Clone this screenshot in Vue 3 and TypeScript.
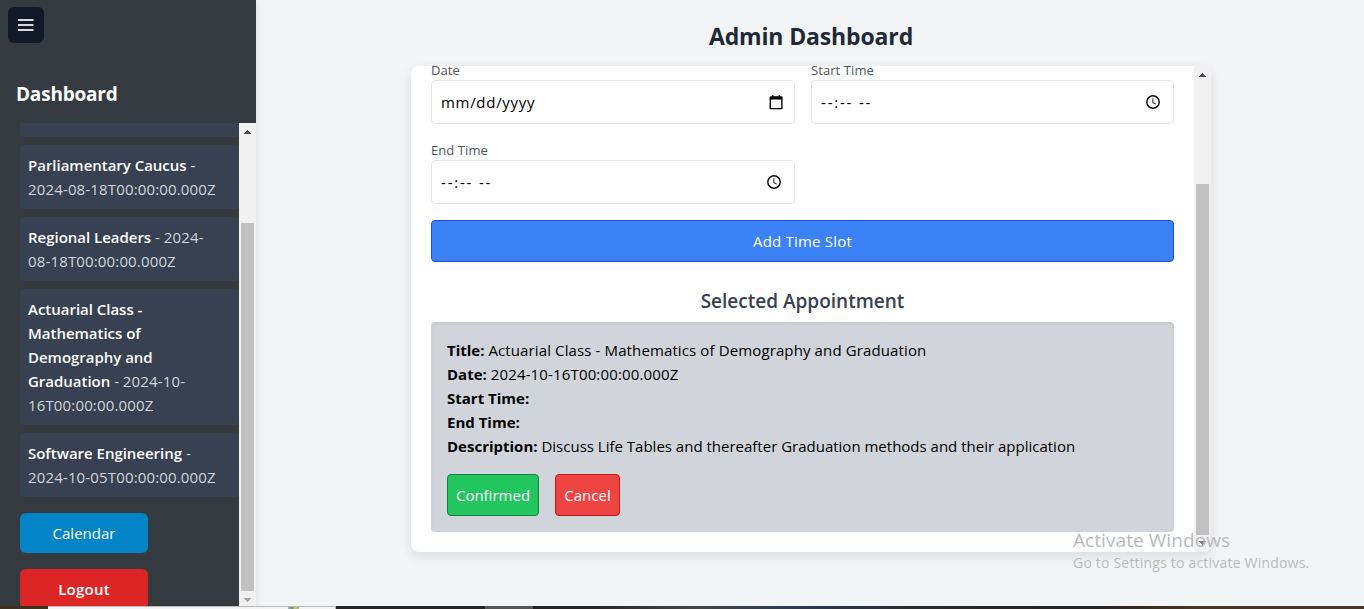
<script setup lang="ts">
interface Appointment {
  title: string
  date: string
  brightDash?: boolean
}

interface Detail {
  label: string
  value: string
  tone: string
}

const appointments: Appointment[] = [
  { title: 'Parliamentary Caucus', date: '2024-08-18T00:00:00.000Z', brightDash: true },
  { title: 'Regional Leaders', date: '2024-08-18T00:00:00.000Z' },
  { title: 'Actuarial Class - Mathematics of Demography and Graduation', date: '2024-10-16T00:00:00.000Z' },
  { title: 'Software Engineering', date: '2024-10-05T00:00:00.000Z' },
]

const fields = [
  { label: 'Date', placeholder: 'mm/dd/yyyy', kind: 'date' },
  { label: 'Start Time', placeholder: '--:-- --', kind: 'time' },
  { label: 'End Time', placeholder: '--:-- --', kind: 'time' },
]

const details: Detail[] = [
  { label: 'Title:', value: 'Actuarial Class - Mathematics of Demography and Graduation', tone: 'title' },
  { label: 'Date:', value: '2024-10-16T00:00:00.000Z', tone: 'date' },
  { label: 'Start Time:', value: '', tone: 'start' },
  { label: 'End Time:', value: '', tone: 'end-time' },
  { label: 'Description:', value: 'Discuss Life Tables and thereafter Graduation methods and their application', tone: 'desc' },
]
</script>

<template>
  <div class="screen">
    <div class="page">
      <aside class="sidebar">
        <button class="menu" aria-label="Menu">
          <svg width="16" height="14" viewBox="0 0 16 14"><path d="M0 2h15.5M0 7h15.5M0 12h15.5" stroke="#d6d9de" stroke-width="1.8" /></svg>
        </button>
        <h2 class="side-title">Dashboard</h2>
        <div class="side-scroll">
          <div class="side-list">
            <div class="item stub"></div>
            <div v-for="a in appointments" :key="a.title" class="item">
              <strong>{{ a.title }}</strong><span :class="{ bright: a.brightDash }"> - </span><span class="stamp">{{ a.date }}</span>
            </div>
            <button class="nav calendar">Calendar</button>
            <button class="nav logout">Logout</button>
          </div>
          <div class="bar side-bar">
            <svg class="arrow" width="17" height="17" viewBox="0 0 17 17"><path d="M5 11h7v-1h-1v-1h-1v-1h-1v-1h-1v1h-1v1h-1v1h-1z" fill="#505050" shape-rendering="crispEdges" /></svg>
            <div class="thumb"></div>
            <svg class="arrow end" width="17" height="17" viewBox="0 0 17 17"><path d="M5 7h7v1h-1v1h-1v1h-1v1h-1v-1h-1v-1h-1v-1h-1z" fill="#a3a3a3" shape-rendering="crispEdges" /></svg>
          </div>
        </div>
      </aside>

      <main class="main">
        <h1 class="heading">Admin Dashboard</h1>
        <section class="card">
          <div class="content">
            <div class="fields">
              <div v-for="f in fields" :key="f.label" class="field">
                <label>{{ f.label }}</label>
                <div class="input" :class="f.kind">
                  <span>{{ f.placeholder }}</span>
                  <svg v-if="f.kind === 'date'" width="14" height="15" viewBox="0 0 14 15"><path d="M3 0h1.6v2H3zM9.6 0h1.6v2H9.6z" fill="#000" /><path d="M1.6 1.2h11q1 0 1 1v11q0 1-1 1h-11q-1 0-1-1v-11q0-1 1-1zM2 4.4v8.6h10.2V4.4z" fill="#000" fill-rule="evenodd" /></svg>
                  <svg v-else width="14" height="14" viewBox="0 0 14 14"><circle cx="7" cy="7" r="6.2" fill="none" stroke="#111" stroke-width="1.5" /><path d="M6.8 3.4v4l2.9 1.8" fill="none" stroke="#333" stroke-width="1.1" /></svg>
                </div>
              </div>
            </div>
            <button class="add">Add Time Slot</button>
            <h2 class="sub">Selected Appointment</h2>
            <div class="selected">
              <p v-for="d in details" :key="d.label" :class="d.tone"><strong>{{ d.label }}</strong> <span>{{ d.value }}</span></p>
              <div class="actions">
                <button class="confirm">Confirmed</button>
                <button class="cancel">Cancel</button>
              </div>
            </div>
          </div>
          <div class="bar card-bar">
            <svg class="arrow" width="17" height="17" viewBox="0 0 17 17"><path d="M5 11h7v-1h-1v-1h-1v-1h-1v-1h-1v1h-1v1h-1v1h-1z" fill="#505050" shape-rendering="crispEdges" /></svg>
            <div class="thumb"></div>
            <svg class="arrow end" width="17" height="17" viewBox="0 0 17 17"><path d="M5 6h7v1h-1v1h-1v1h-1v1h-1v-1h-1v-1h-1v-1h-1z" fill="#808080" shape-rendering="crispEdges" /></svg>
          </div>
        </section>
      </main>
    </div>
    <div class="taskbar">
      <div class="tb-start"></div>
      <div class="tb-search"><i></i></div>
      <div class="tb-rest"><i></i></div>
    </div>
    <div class="watermark">
      <div class="wm-title">Activate Windows</div>
      <div class="wm-text">Go to Settings to activate Windows.</div>
    </div>
  </div>
</template>

<style>
body { margin: 0; overflow: hidden; }
</style>

<style scoped>
* { box-sizing: border-box; }
h1, h2, p { margin: 0; }
button { font: inherit; padding: 0; border: 0; color: #fff; }
svg { display: block; flex: none; }
.screen {
  position: relative;
  width: 1364px;
  height: 609px;
  overflow: hidden;
  display: flex;
  flex-direction: column;
  background: #f3f4f6;
  font: 15px/24px "Open Sans", "Noto Sans", sans-serif;
  color: #000;
}
.page { display: flex; height: 606px; overflow: hidden; }

.sidebar {
  width: 256px;
  flex: none;
  display: flex;
  flex-direction: column;
  background: #343a40;
  box-shadow: 0 0 8px rgba(0, 0, 0, 0.1);
}
.menu {
  width: 36px;
  height: 36px;
  margin: 7px 0 0 8px;
  border-radius: 6px;
  background: #111827;
  display: flex;
  align-items: center;
  justify-content: center;
}
.side-title { margin: 37px 0 15px 16px; font-size: 19px; line-height: 28px; font-weight: 700; color: #fff; letter-spacing: -0.2px; }
.side-scroll { flex: 1; min-height: 0; display: flex; padding-left: 20px; overflow: hidden; }
.side-list { width: 219px; display: flex; flex-direction: column; overflow: hidden; }
.item { flex: none; padding: 8px 14px 8px 8px; margin-bottom: 8px; border-radius: 4px; background: #374151; color: #d1d5db; }
.item.stub { height: 14px; padding: 0; border-radius: 0 0 4px 4px; }
.item strong { font-weight: 600; color: #fff; letter-spacing: -0.02px; }
.stamp { letter-spacing: 0.15px; }
.bright { color: #fff; }
.nav { flex: none; width: 128px; height: 40px; border-radius: 6px; margin: 8px 0; }
.calendar { background: #0284c7; }
.logout { background: #dc2626; font-weight: 600; letter-spacing: 0.25px; }

.bar { width: 17px; flex: none; display: flex; flex-direction: column; align-items: center; background: #f1f1f1; }
.thumb { width: 13px; background: #c1c1c1; }
.side-bar .thumb { height: 369px; margin-top: 83px; }
.end { margin-top: auto; }
.side-bar .end { margin-bottom: -2px; }

.main { flex: 1; display: flex; flex-direction: column; align-items: center; padding-left: 2px; }
.heading { margin-top: 20px; font-size: 23px; line-height: 32px; font-weight: 700; color: #1f2937; letter-spacing: -0.14px; }
.card {
  width: 800px;
  height: 486px;
  margin-top: 14px;
  display: flex;
  border-radius: 8px;
  overflow: hidden;
  background: #fff;
  box-shadow: 0 4px 12px rgba(0, 0, 0, 0.1);
}
.content { width: 783px; padding: 0 20px; margin-top: -6px; }
.fields { display: grid; grid-template-columns: 364px 363px; gap: 16px; }
.field label { display: block; font-size: 13px; line-height: 20px; color: #4b5563; letter-spacing: 0.08px; }
.input {
  height: 44px;
  border: 1px solid #e5e7eb;
  border-radius: 4px;
  padding: 0 11px 0 9px;
  display: flex;
  align-items: center;
  justify-content: space-between;
}
.input.date { letter-spacing: 0.7px; }
.input.time { padding-right: 13px; letter-spacing: 1.8px; }
.add { display: block; width: 743px; height: 42px; margin-top: 16px; border: 1px solid #1d4ed8; border-radius: 4px; background: #3b82f6; letter-spacing: 0.2px; }
.sub { margin: 25px 0 7px; font-size: 19px; line-height: 28px; font-weight: 600; color: #374151; text-align: center; }
.selected { height: 210px; padding: 16px; border-radius: 4px; background: #d1d5db; box-shadow: inset 0 2px 4px rgba(0, 0, 0, 0.06); white-space: nowrap; }
.selected strong { font-weight: 700; }
.title span { letter-spacing: 0.12px; }
.date span { letter-spacing: 0.15px; }
.input.date span { letter-spacing: 0.7px; }
.actions { display: flex; gap: 16px; margin-top: 16px; }
.actions button { height: 42px; border-radius: 4px; }
.confirm { width: 92px; background: #22c55e; border: 1px solid #15803d; }
.cancel { width: 65px; background: #ef4444; border: 1px solid #b91c1c; }
.card-bar .thumb { height: 351px; margin-top: 101px; }

.taskbar { height: 3px; display: flex; }
.tb-start { width: 48px; background: #40301f; }
.tb-search { width: 288px; background: #f3f3f3; border-top: 1px solid #b8b8b8; border-right: 1px solid #b8b8b8; padding-left: 240px; }
.tb-search i { display: block; width: 11px; height: 2px; background: linear-gradient(90deg, #9bb8b0, #688a87 40%, #d8c84a 60%, #9fb0a0); }
.tb-rest { flex: 1; background: linear-gradient(90deg, #252422 0 24%, #454545 35%, #2e3a50 44%, #2a2927 60%, #262422 74%, #463424 83%, #46362a); padding-left: 149px; }
.tb-rest i { display: block; width: 48px; height: 3px; background: #555; }

.watermark { position: absolute; left: 1073px; top: 528px; color: #b9babc; white-space: nowrap; }
.wm-title { font-size: 19px; line-height: 25px; letter-spacing: 0.07px; }
.wm-text { font-size: 14px; line-height: 20px; letter-spacing: 0.2px; }
</style>
